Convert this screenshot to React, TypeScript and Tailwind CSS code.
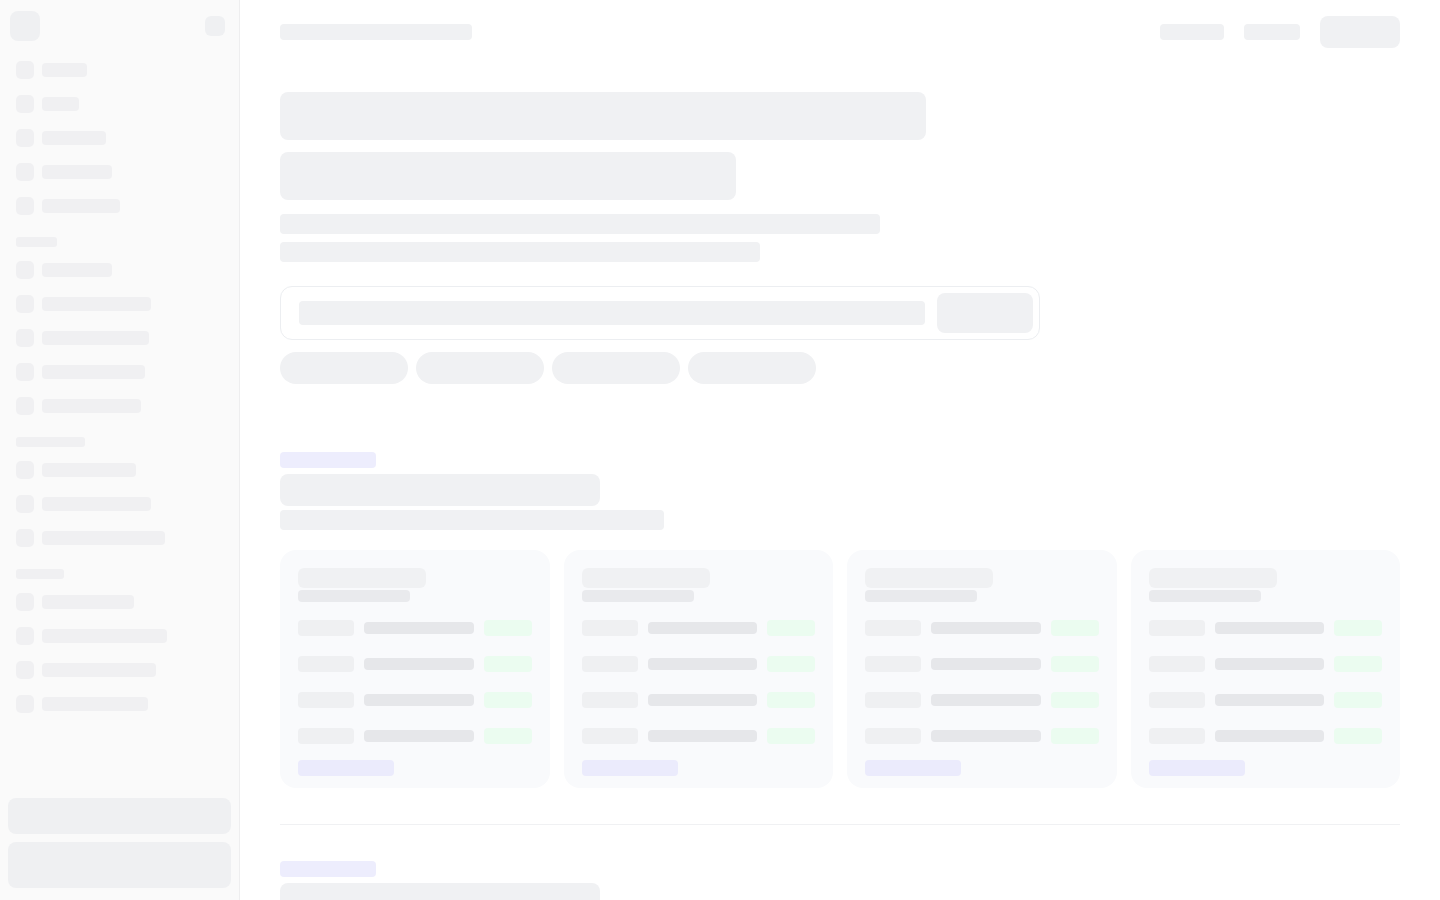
import React from "react";

const groups: { label?: number; items: number[] }[] = [
  { items: [45, 37, 64, 70, 78] },
  { label: 41, items: [70, 109, 107, 103, 99] },
  { label: 69, items: [94, 109, 123] },
  { label: 48, items: [92, 125, 114, 106] },
];

function NavItem({ w }: { w: number }) {
  return (
    <div className="flex items-center gap-2 h-[18px]">
      <div className="w-[18px] h-[18px] rounded-[5px] bg-[#f0f0f2]" />
      <div className="h-3.5 rounded-[4px] bg-[#f0f0f2]" style={{ width: w }} />
    </div>
  );
}

function Card() {
  return (
    <div className="rounded-2xl bg-[#f9fafc] p-[18px] pb-3 h-[238px] flex flex-col">
      <div className="h-5 w-32 rounded-md bg-[#f0f1f3]" />
      <div className="mt-0.5 h-3 w-28 rounded bg-[#e9eaed]" />
      <div className="mt-[18px] flex flex-col gap-5">
        {[0, 1, 2, 3].map((i) => (
          <div key={i} className="flex items-center gap-2.5 h-4">
            <div className="w-14 h-4 rounded bg-[#eff0f2]" />
            <div className="flex-1 h-3 rounded bg-[#e6e7ea]" />
            <div className="w-12 h-4 rounded bg-[#ebfcf0]" />
          </div>
        ))}
      </div>
      <div className="mt-4 h-4 w-24 rounded bg-[#ebebfc]" />
    </div>
  );
}

function Section() {
  return (
    <div>
      <div className="h-4 w-24 rounded bg-[#ededfd]" />
      <div className="mt-1.5 h-8 w-80 rounded-lg bg-[#f0f1f3]" />
      <div className="mt-1 h-5 w-96 rounded bg-[#f0f1f3]" />
      <div className="mt-5 grid grid-cols-4 gap-3.5">
        <Card />
        <Card />
        <Card />
        <Card />
      </div>
    </div>
  );
}

export default function App() {
  return (
    <div className="flex h-screen w-full overflow-hidden bg-white">
      <aside className="w-[240px] shrink-0 h-full bg-[#fafafa] border-r border-[#eeeeef] flex flex-col">
        <div className="flex items-center justify-between pl-2.5 pr-[14px] pt-[11px]">
          <div className="w-[30px] h-[30px] rounded-lg bg-[#eff0f2]" />
          <div className="w-5 h-5 rounded-md bg-[#eff0f2]" />
        </div>
        <nav className="mt-5 px-4 flex flex-col">
          {groups.map((g, gi) => (
            <div key={gi} className={gi === 0 ? "" : "mt-[22px]"}>
              {g.label && (
                <div className="h-2.5 rounded-[3px] bg-[#f0f0f2] mb-3.5" style={{ width: g.label }} />
              )}
              <div className="flex flex-col gap-4">
                {g.items.map((w, i) => (
                  <NavItem key={i} w={w} />
                ))}
              </div>
            </div>
          ))}
        </nav>
        <div className="mt-auto px-2 pb-3 flex flex-col gap-2">
          <div className="h-9 rounded-lg bg-[#eff0f2]" />
          <div className="h-[46px] rounded-lg bg-[#eff0f2]" />
        </div>
      </aside>

      <main className="flex-1 h-full overflow-hidden px-10">
        <header className="h-16 flex items-center justify-between">
          <div className="h-4 w-48 rounded bg-[#f0f1f3]" />
          <div className="flex items-center gap-5">
            <div className="h-4 w-16 rounded bg-[#f0f1f3]" />
            <div className="h-4 w-14 rounded bg-[#f0f1f3]" />
            <div className="h-8 w-20 rounded-lg bg-[#f0f1f3]" />
          </div>
        </header>

        <div className="mt-7">
          <div className="h-12 w-[646px] rounded-lg bg-[#f0f1f3]" />
          <div className="mt-3 h-12 w-[456px] rounded-lg bg-[#f0f1f3]" />
          <div className="mt-3.5 h-5 w-[600px] rounded bg-[#f0f1f3]" />
          <div className="mt-2 h-5 w-[480px] rounded bg-[#f0f1f3]" />
          <div className="mt-6 h-[54px] w-[760px] rounded-xl border border-[#eceef1] flex items-center pl-[18px] pr-1.5 gap-3">
            <div className="flex-1 h-6 rounded bg-[#f0f1f3]" />
            <div className="w-24 h-10 rounded-lg bg-[#f0f1f3]" />
          </div>
          <div className="mt-3 flex gap-2">
            <div className="w-32 h-8 rounded-full bg-[#f0f1f3]" />
            <div className="w-32 h-8 rounded-full bg-[#f0f1f3]" />
            <div className="w-32 h-8 rounded-full bg-[#f0f1f3]" />
            <div className="w-32 h-8 rounded-full bg-[#f0f1f3]" />
          </div>
        </div>

        <div className="mt-[68px]">
          <Section />
        </div>
        <div className="mt-9 h-px bg-[#f0f1f3]" />
        <div className="mt-9">
          <Section />
        </div>
      </main>
    </div>
  );
}
